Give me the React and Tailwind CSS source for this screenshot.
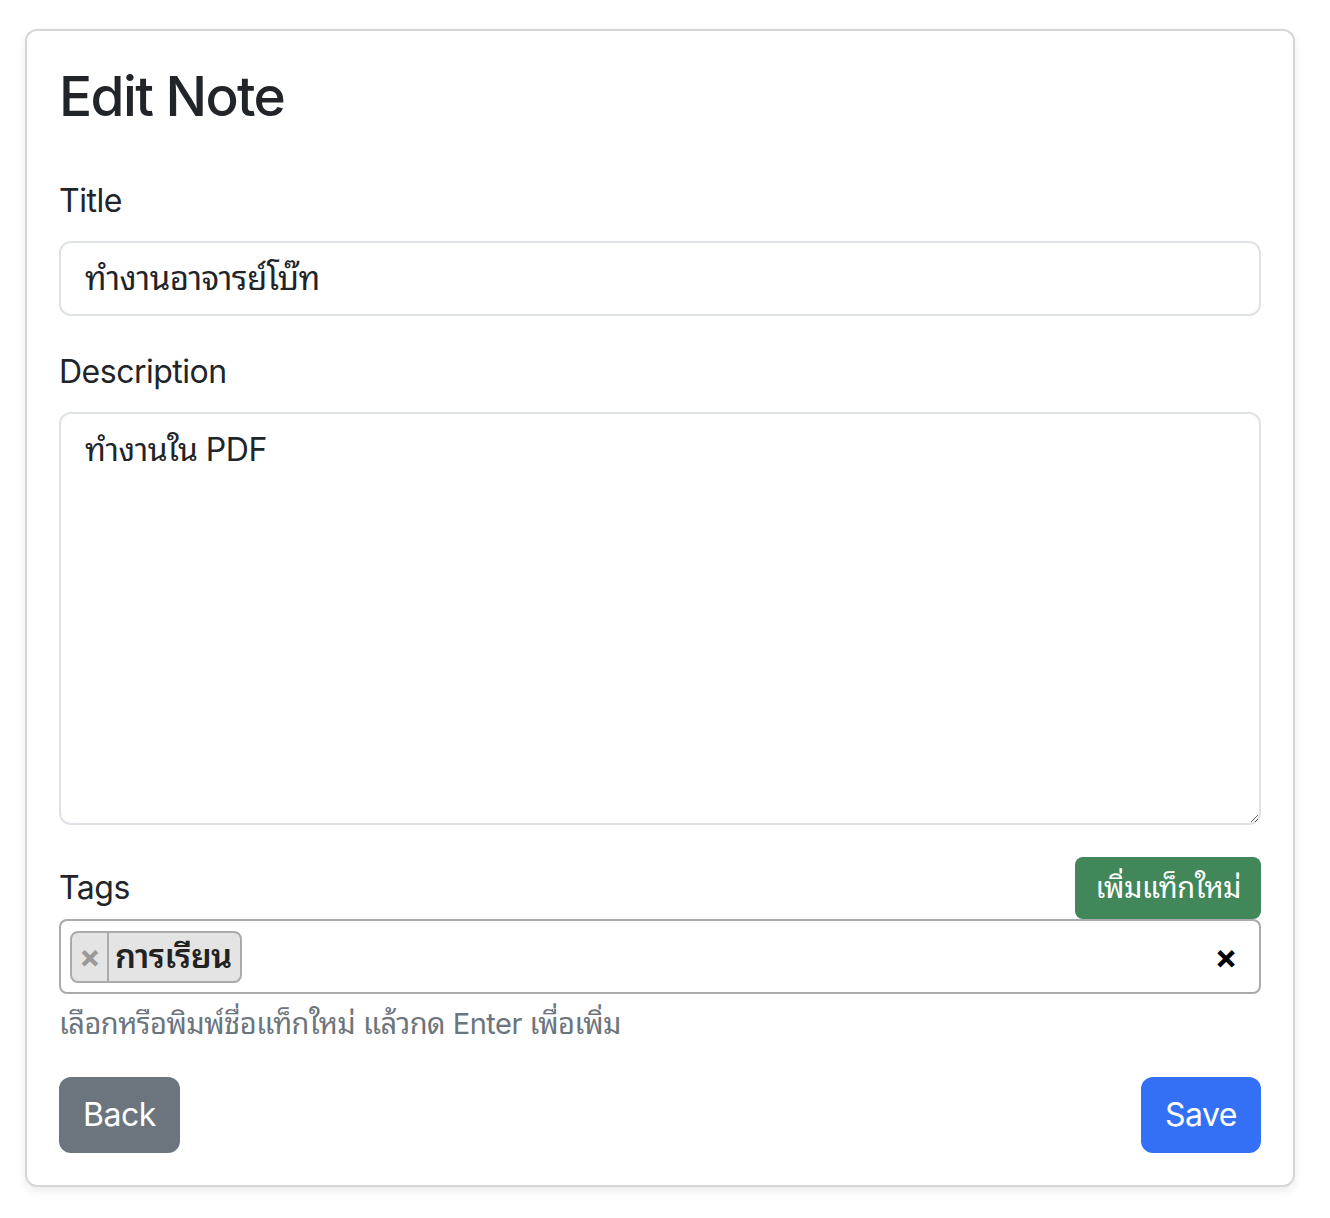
import React from "react";

const font = {
  fontFamily:
    "Inter, 'Noto Sans Thai Looped', 'Noto Sans Thai', 'Noto Sans', 'DejaVu Sans', sans-serif",
};

export default function App() {
  return (
    <div
      className="min-h-[1218px] bg-white pt-[29px] pl-[25px] pb-[32px] text-[#212529] tracking-[-0.5px]"
      style={font}
    >
      <div className="w-[1270px] rounded-[12px] border-2 border-[#d6d6d6] bg-white px-[32px] py-[32px] shadow-[0_4px_10px_rgba(0,0,0,0.08)]">
        <h3 className="mb-[47px] text-[55px] font-medium leading-[67px] tracking-[-1.6px]">Edit Note</h3>

        <label className="mb-[16px] block text-[32px] leading-[48px]">Title</label>
        <div className="mb-[32px] flex h-[75px] items-center rounded-[12px] border-2 border-[#dee2e6] px-[24px] text-[33px]">
          ทำงานอาจารย์โบ๊ท
        </div>

        <label className="mb-[16px] block text-[32px] leading-[48px]">Description</label>
        <textarea
          className="mb-[32px] block h-[413px] w-full resize-y rounded-[12px] border-2 border-[#dee2e6] px-[24px] py-[12px] text-[32px] leading-[48px] tracking-[-0.5px] text-[#212529] outline-none"
          style={font}
          defaultValue="ทำงานใน PDF"
        />

        <div className="flex h-[62px] items-center justify-between">
          <label className="text-[32px] leading-[48px]">Tags</label>
          <button className="h-[62px] rounded-[8px] bg-[#41875a] px-[20px] text-[29px] leading-[42px] text-white">
            เพิ่มแท็กใหม่
          </button>
        </div>
        <div className="flex h-[75px] items-center justify-between rounded-[8px] border-2 border-[#aaaaaa] pl-[9px] pr-[22px]">
          <div className="flex h-[52px] items-stretch overflow-hidden rounded-[8px] border-2 border-[#aaaaaa] bg-[#e4e4e4]">
            <span className="flex w-[37px] items-center justify-center border-r-2 border-[#aaaaaa] text-[32px] font-bold leading-none text-[#999999]">
              ×
            </span>
            <span className="flex items-center pl-[6px] pr-[8px] text-[33px] font-semibold leading-none text-[#222]">
              การเรียน
            </span>
          </div>
          <span className="text-[34px] font-bold leading-none text-black">×</span>
        </div>
        <div className="mt-[9px] text-[29px] leading-[42px] text-[#6c757d]">
          เลือกหรือพิมพ์ชื่อแท็กใหม่ แล้วกด Enter เพื่อเพิ่ม
        </div>

        <div className="mt-[32px] flex justify-between">
          <button className="h-[76px] rounded-[12px] bg-[#6c757d] px-[24px] text-[32px] text-white">
            Back
          </button>
          <button className="h-[76px] rounded-[12px] bg-[#3370f5] px-[24px] text-[32px] text-white">
            Save
          </button>
        </div>
      </div>
    </div>
  );
}
